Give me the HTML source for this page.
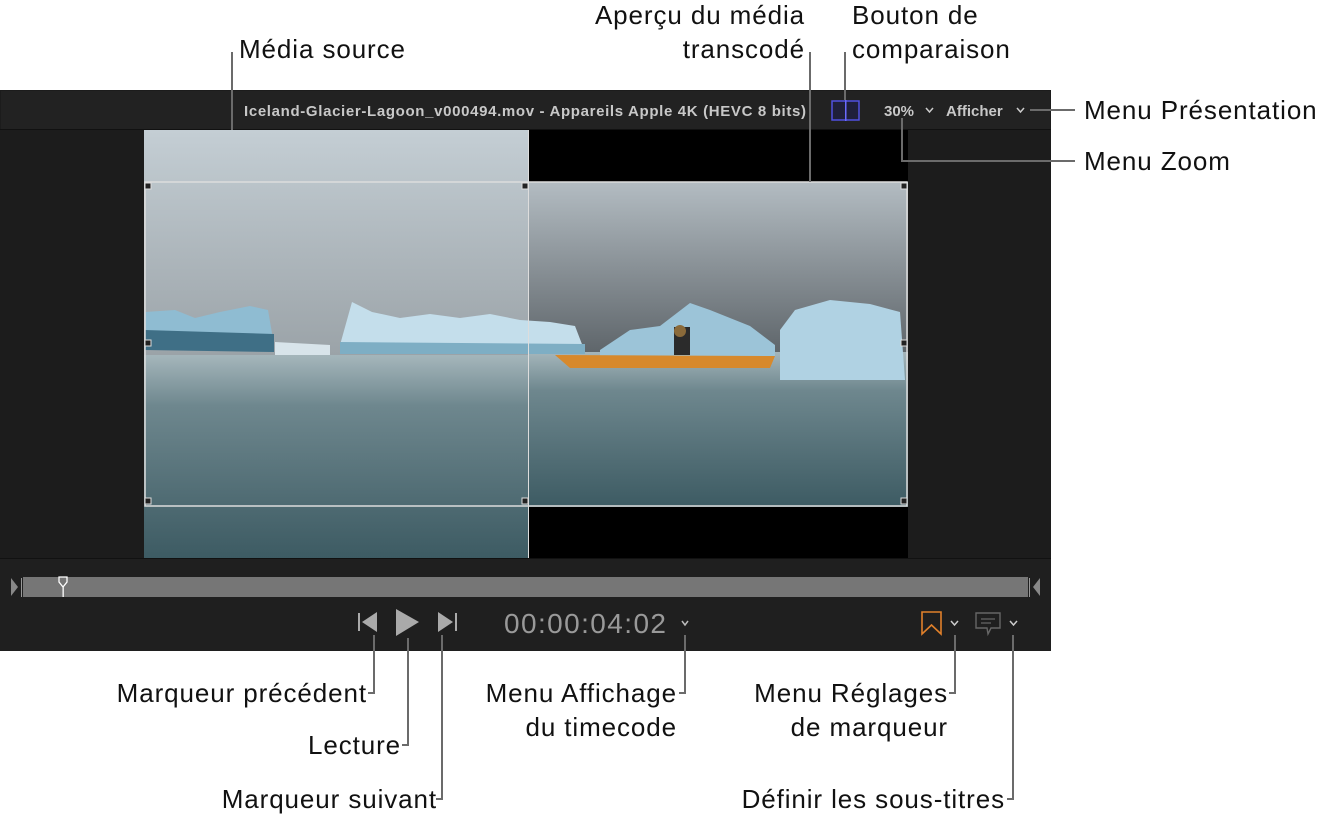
<!DOCTYPE html>
<html><head><meta charset="utf-8"><style>
body{margin:0;width:1335px;height:817px;background:#fff;position:relative;overflow:hidden;font-family:"Liberation Sans",sans-serif}
.l{position:absolute;font-size:26px;letter-spacing:0.9px;color:#111;line-height:34px;white-space:nowrap}
.r{text-align:right}
.v{position:absolute;background:#6b6b6b;width:2px}
.h{position:absolute;background:#6b6b6b;height:2px}
</style></head><body>
<svg style="position:absolute;left:0;top:0" width="1335" height="817">
<defs>
<linearGradient id="sky" x1="0" y1="0" x2="0" y2="1"><stop offset="0" stop-color="#c4ced4"/><stop offset="1" stop-color="#9ba3a8"/></linearGradient>
<linearGradient id="sky2" x1="0" y1="0" x2="0" y2="1"><stop offset="0" stop-color="#b3bcc2"/><stop offset="1" stop-color="#5f666b"/></linearGradient>
<linearGradient id="wat" x1="0" y1="0" x2="0" y2="1"><stop offset="0" stop-color="#a5b6bb"/><stop offset="0.25" stop-color="#6e878e"/><stop offset="1" stop-color="#3d5b63"/></linearGradient>
</defs>
<rect x="0" y="90" width="1051" height="561" fill="#1c1c1c"/>
<rect x="1" y="91" width="1049" height="38" fill="#222"/>
<rect x="0" y="129" width="1051" height="1" fill="#111"/>
<rect x="528" y="130" width="380" height="428" fill="#000"/>
<rect x="144" y="130" width="384" height="225" fill="url(#sky)"/>
<rect x="144" y="355" width="384" height="203" fill="url(#wat)"/>
<rect x="528" y="182" width="380" height="170" fill="url(#sky2)"/>
<rect x="528" y="352" width="380" height="155" fill="url(#wat)"/>
<path d="M145 312 L175 310 L195 318 L220 312 L250 306 L268 310 L274 345 L145 345Z" fill="#8fbcd2"/>
<path d="M145 330 L274 334 L274 352 L145 350Z" fill="#3f6f86"/>
<path d="M340 345 L352 302 L372 312 L400 318 L430 314 L460 318 L490 314 L520 320 L550 322 L575 326 L585 352 L340 352Z" fill="#c4deeb"/>
<path d="M340 342 L585 344 L585 354 L340 354Z" fill="#7eaec4"/>
<path d="M275 342 L330 345 L330 355 L275 355Z" fill="#d8e4ea"/>
<path d="M600 350 L630 330 L660 326 L690 303 L710 310 L750 326 L775 345 L775 356 L600 356Z" fill="#9cc4d8"/>
<path d="M780 330 L795 310 L830 300 L870 304 L900 312 L905 380 L780 380Z" fill="#b0d2e3"/>
<path d="M555 355 L775 356 L770 368 L570 368Z" fill="#d7892c"/>
<rect x="674" y="327" width="16" height="28" fill="#2b2b2b"/>
<circle cx="680" cy="331" r="6" fill="#8a6a3a"/>
<rect x="528" y="182" width="1" height="376" fill="#ddd"/>
<rect x="528" y="130" width="1" height="52" fill="#ddd"/>
<rect x="145" y="182" width="762" height="324" fill="none" stroke="#ddd" stroke-width="1.5"/>
<g fill="#222" stroke="#ddd" stroke-width="1">
<rect x="145" y="183" width="6" height="6"/><rect x="522" y="183" width="6" height="6"/><rect x="901" y="183" width="6" height="6"/>
<rect x="145" y="340" width="6" height="6"/><rect x="901" y="340" width="6" height="6"/>
<rect x="145" y="498" width="6" height="6"/><rect x="522" y="498" width="6" height="6"/><rect x="901" y="498" width="6" height="6"/></g>
<rect x="0" y="558" width="1051" height="93" fill="#1f1f1f"/>
<rect x="0" y="558" width="1051" height="1" fill="#111"/>
<rect x="23" y="577" width="1005" height="20" fill="#767676"/>
<path d="M11 578 L18 587 L11 596Z M1040 578 L1033 587 L1040 596Z" fill="#888"/>
<rect x="21" y="578" width="1" height="19" fill="#999"/><rect x="1029" y="578" width="1" height="19" fill="#999"/>
<path d="M59 577 L67 577 L67 582 L63 587 L59 582Z" fill="none" stroke="#fff" stroke-width="1.3"/>
<rect x="62.5" y="587" width="1.3" height="10" fill="#fff"/>
<rect x="358" y="613" width="2" height="18" fill="#aaa"/><path d="M377 612 L362 622 L377 632Z" fill="#aaa"/>
<path d="M396 609 L419 622 L396 636Z" fill="#aaa"/>
<path d="M438 612 L453 622 L438 632Z" fill="#aaa"/><rect x="455" y="613" width="2" height="18" fill="#aaa"/>
<text x="504" y="633" font-size="28" fill="#999" font-family="Liberation Sans" textLength="162">00:00:04:02</text>
<path d="M682 621 L685 625 L688 621" fill="none" stroke="#bbb" stroke-width="1.5"/>
<path d="M922 612 L941 612 L941 634 L931.5 625 L922 634Z" fill="none" stroke="#e0802a" stroke-width="1.6"/>
<path d="M951 621 L954.5 625 L958 621" fill="none" stroke="#ccc" stroke-width="1.5"/>
<path d="M976 613 L1000 613 L1000 628 L991 628 L988 634 L987 628 L976 628Z" fill="none" stroke="#666" stroke-width="1.4"/>
<path d="M981 619 L995 619 M981 623 L991 623" stroke="#666" stroke-width="1.2"/>
<path d="M1010 621 L1013.5 625 L1017 621" fill="none" stroke="#ccc" stroke-width="1.5"/>
<text x="244" y="116" font-size="15" fill="#c8c8c8" font-weight="bold" textLength="562">Iceland-Glacier-Lagoon_v000494.mov - Appareils Apple 4K (HEVC 8 bits)</text>
<rect x="832" y="101" width="27" height="19" fill="#1f1f3a" stroke="#5050e0" stroke-width="1.5"/>
<rect x="845" y="100" width="1.5" height="21" fill="#6a6aff"/>
<text x="884" y="116" font-size="15" fill="#c8c8c8" font-weight="bold">30%</text>
<path d="M926 108 L929.5 112 L933 108" fill="none" stroke="#ccc" stroke-width="1.5"/>
<text x="946" y="116" font-size="15" fill="#c8c8c8" font-weight="bold">Afficher</text>
<path d="M1017 108 L1020.5 112 L1024 108" fill="none" stroke="#ccc" stroke-width="1.5"/>
</svg>
<div class="v" style="left:231px;top:52px;height:78px"></div>
<div class="v" style="left:809px;top:52px;height:130px"></div>
<div class="v" style="left:844px;top:52px;height:48px"></div>
<div class="h" style="left:1030px;top:109px;width:45px"></div>
<div class="v" style="left:901px;top:118px;height:44px"></div>
<div class="h" style="left:901px;top:160px;width:174px"></div>
<div class="v" style="left:373px;top:635px;height:59px"></div><div class="h" style="left:368px;top:692px;width:7px"></div>
<div class="v" style="left:407px;top:638px;height:108px"></div><div class="h" style="left:402px;top:744px;width:7px"></div>
<div class="v" style="left:441px;top:635px;height:165px"></div><div class="h" style="left:436px;top:798px;width:7px"></div>
<div class="v" style="left:684px;top:635px;height:59px"></div><div class="h" style="left:679px;top:692px;width:7px"></div>
<div class="v" style="left:954px;top:635px;height:59px"></div><div class="h" style="left:949px;top:692px;width:7px"></div>
<div class="v" style="left:1012px;top:635px;height:165px"></div><div class="h" style="left:1007px;top:798px;width:7px"></div>
<div class="l" style="left:239px;top:32px">Média source</div>
<div class="l r" style="right:530px;top:-2px">Aperçu du média<br>transcodé</div>
<div class="l" style="left:852px;top:-2px">Bouton de<br>comparaison</div>
<div class="l" style="left:1084px;top:93px">Menu Présentation</div>
<div class="l" style="left:1084px;top:144px">Menu Zoom</div>
<div class="l r" style="right:968px;top:676px">Marqueur précédent</div>
<div class="l r" style="right:934px;top:728px">Lecture</div>
<div class="l r" style="right:898px;top:782px">Marqueur suivant</div>
<div class="l r" style="right:658px;top:676px">Menu Affichage<br>du timecode</div>
<div class="l r" style="right:387px;top:676px">Menu Réglages<br>de marqueur</div>
<div class="l r" style="right:330px;top:782px">Définir les sous-titres</div>
</body></html>
